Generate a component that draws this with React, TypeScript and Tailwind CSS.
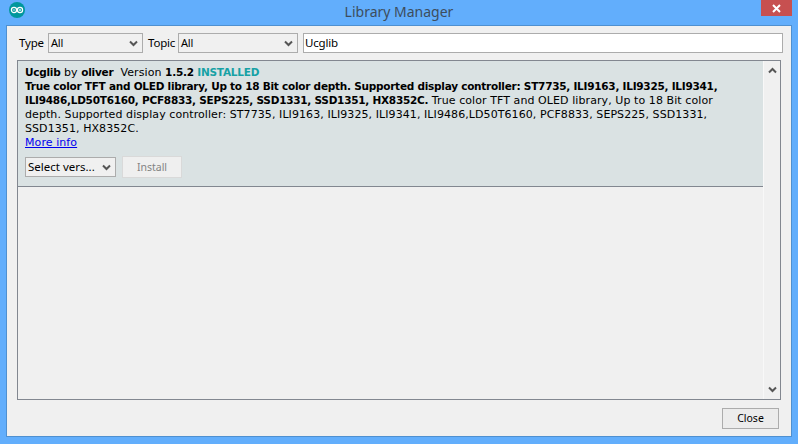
const dejavu = "font-['DejaVu_Sans',sans-serif]";
const tahoma = "font-['Noto_Sans',sans-serif]";
const boldText = 'font-bold text-[10.5px] tracking-[-0.25px]';
const textLine = 'h-[14px] whitespace-nowrap';

function Chevron({ up = false }: { up?: boolean }) {
  return (
    <svg width="9" height="7" viewBox="0 0 9 7" className={up ? 'rotate-180' : ''}>
      <path d="M1 1.5 L4.5 5 L8 1.5" fill="none" stroke="#555" strokeWidth="2" />
    </svg>
  );
}

function Select({ label, className }: { label: string; className: string }) {
  return (
    <div
      className={`flex items-center justify-between border border-[#acacac] bg-[#f0f0f0] pl-[2px] pr-[4px] text-black ${tahoma} ${className}`}
    >
      <span className="whitespace-nowrap">{label}</span>
      <Chevron />
    </div>
  );
}

function Logo() {
  return (
    <svg width="16" height="16" viewBox="0 0 16 16">
      <circle cx="8" cy="8" r="8" fill="#00979c" />
      <circle cx="5" cy="8" r="2.6" fill="none" stroke="#fff" strokeWidth="1.2" />
      <circle cx="11" cy="8" r="2.6" fill="none" stroke="#fff" strokeWidth="1.2" />
      <path d="M3.8 8 H6.2 M9.8 8 H12.2 M11 6.8 V9.2" stroke="#fff" strokeWidth="0.8" />
    </svg>
  );
}

export default function App() {
  return (
    <div className={`flex h-[444px] w-[798px] flex-col overflow-hidden bg-[#62aefc] ${tahoma}`}>
      {/* title bar */}
      <div className="relative flex h-[25px] shrink-0 items-start pl-[9px] pt-[2px]">
        <Logo />
        <div className="flex-1 pt-[1px] pr-[25px] text-center text-[14px] leading-[18px] text-[#3d4d5c]">
          Library Manager
        </div>
        <div className="absolute right-[6px] top-0 flex h-[16px] w-[31px] items-center justify-center bg-[#c75050]">
          <svg width="9" height="9" viewBox="0 0 9 9">
            <path d="M1 1 L8 8 M8 1 L1 8" stroke="#fff" strokeWidth="2" />
          </svg>
        </div>
      </div>

      {/* window */}
      <div className="mx-[6px] mb-[7px] flex flex-1 flex-col border border-[#4f90d0] bg-[#f0f0f0] pl-[10px] pr-[8px] pt-[7px]">
        <div className="flex h-[20px] shrink-0 items-center text-[11.5px] tracking-[-0.2px] text-black">
          <span className="ml-[2px] w-[29px]">Type</span>
          <Select label="All" className="h-[20px] w-[95px] text-[11px]" />
          <span className="ml-[5px] w-[30px]">Topic</span>
          <Select label="All" className="h-[20px] w-[120px] text-[11px]" />
          <div className="ml-[5px] flex h-[20px] w-[480px] items-center border border-[#acacac] bg-white pl-[1px] text-[11.5px]">
            Ucglib
          </div>
        </div>

        {/* results */}
        <div className="mt-[7px] flex h-[340px] w-[764px] shrink-0 border border-[#828790] bg-[#f0f0f0]">
          <div className="min-w-0 flex-1">
            <div
              className={`h-[126px] overflow-hidden border-b border-[#828790] bg-[#dae2e3] pl-[7px] pt-[4px] text-[11px] leading-[14px] tracking-[0.08px] text-black ${dejavu}`}
            >
              <div className={textLine}>
                <b className={boldText}>Ucglib</b> by <b className={boldText}>oliver</b>&nbsp; Version{' '}
                <b className={boldText}>1.5.2</b> <b className={`${boldText} text-[#17a1a5]`}>INSTALLED</b>
              </div>
              <div className={`${textLine} ${boldText}`}>
                True color TFT and OLED library, Up to 18 Bit color depth. Supported display controller: ST7735, ILI9163, ILI9325, ILI9341,
              </div>
              <div className={textLine}>
                <b className={boldText}>ILI9486,LD50T6160, PCF8833, SEPS225, SSD1331, SSD1351, HX8352C.</b> True color TFT and OLED library, Up to 18 Bit color
              </div>
              <div className={`mt-[1px] ${textLine}`}>
                depth. Supported display controller: ST7735, ILI9163, ILI9325, ILI9341, ILI9486,LD50T6160, PCF8833, SEPS225, SSD1331,
              </div>
              <div className={textLine}>SSD1351, HX8352C.</div>
              <div className={textLine}>
                <a href="#" className="text-[#0000ee] underline">
                  More info
                </a>
              </div>
              <div className={`mt-[6px] flex items-center gap-[6px] tracking-normal ${tahoma}`}>
                <Select label="Select vers..." className="h-[20px] w-[91px] text-[11.5px]" />
                <div className="flex h-[22px] w-[60px] items-center justify-center border border-[#d9d9d9] bg-[#efefef] text-[10.5px] text-[#838383]">
                  Install
                </div>
              </div>
            </div>
          </div>
          <div className="flex w-[17px] shrink-0 flex-col items-center justify-between border-l border-[#f8f8f8] bg-[#f0f0f0] py-[6px]">
            <Chevron up />
            <Chevron />
          </div>
        </div>

        <div className="mt-[8px] flex justify-end pr-[4px]">
          <div className="flex h-[21px] w-[57px] items-center justify-center border border-[#acacac] bg-[#ececec] text-[10.5px] text-black">
            Close
          </div>
        </div>
      </div>
    </div>
  );
}
